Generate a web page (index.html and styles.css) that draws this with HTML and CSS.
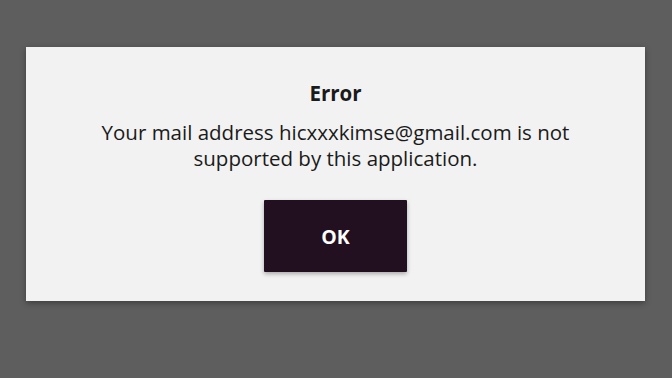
FILE: index.html
```html
<!DOCTYPE html>
<html>
<head>
<meta charset="utf-8">
<link rel="stylesheet" href="styles.css">
</head>
<body>
<div class="screen">
  <div class="dialog">
    <h1 class="title">Error</h1>
    <p class="message">Your mail address hicxxxkimse@gmail.com is not<br>supported by this application.</p>
    <button class="ok">OK</button>
  </div>
</div>
</body>
</html>
```
FILE: styles.css
```css
html, body {
  margin: 0;
  padding: 0;
  width: 672px;
  height: 378px;
  overflow: hidden;
  background: #5e5e5e;
}
.screen {
  padding: 47px 27px 0 26px;
}
.dialog {
  background: #f2f2f2;
  height: 254px;
  box-sizing: border-box;
  display: flex;
  flex-direction: column;
  align-items: center;
  padding-top: 33px;
  box-shadow: 0 2px 6px rgba(0,0,0,0.35);
  font-family: "Open Sans", sans-serif;
  color: #1a1a1a;
}
.title {
  margin: 0;
  font-size: 20.5px;
  font-weight: 700;
  line-height: 26px;
}
.message {
  margin: 13px 0 0;
  font-size: 20.5px;
  line-height: 26px;
  text-align: center;
}
.ok {
  margin-top: 29px;
  width: 143px;
  height: 72px;
  background: #220f1f;
  color: #ffffff;
  border: none;
  border-radius: 1px;
  font-family: "Open Sans", sans-serif;
  font-weight: 700;
  font-size: 19.5px;
  box-shadow: 0 2px 4px rgba(0,0,0,0.3);
}
```
